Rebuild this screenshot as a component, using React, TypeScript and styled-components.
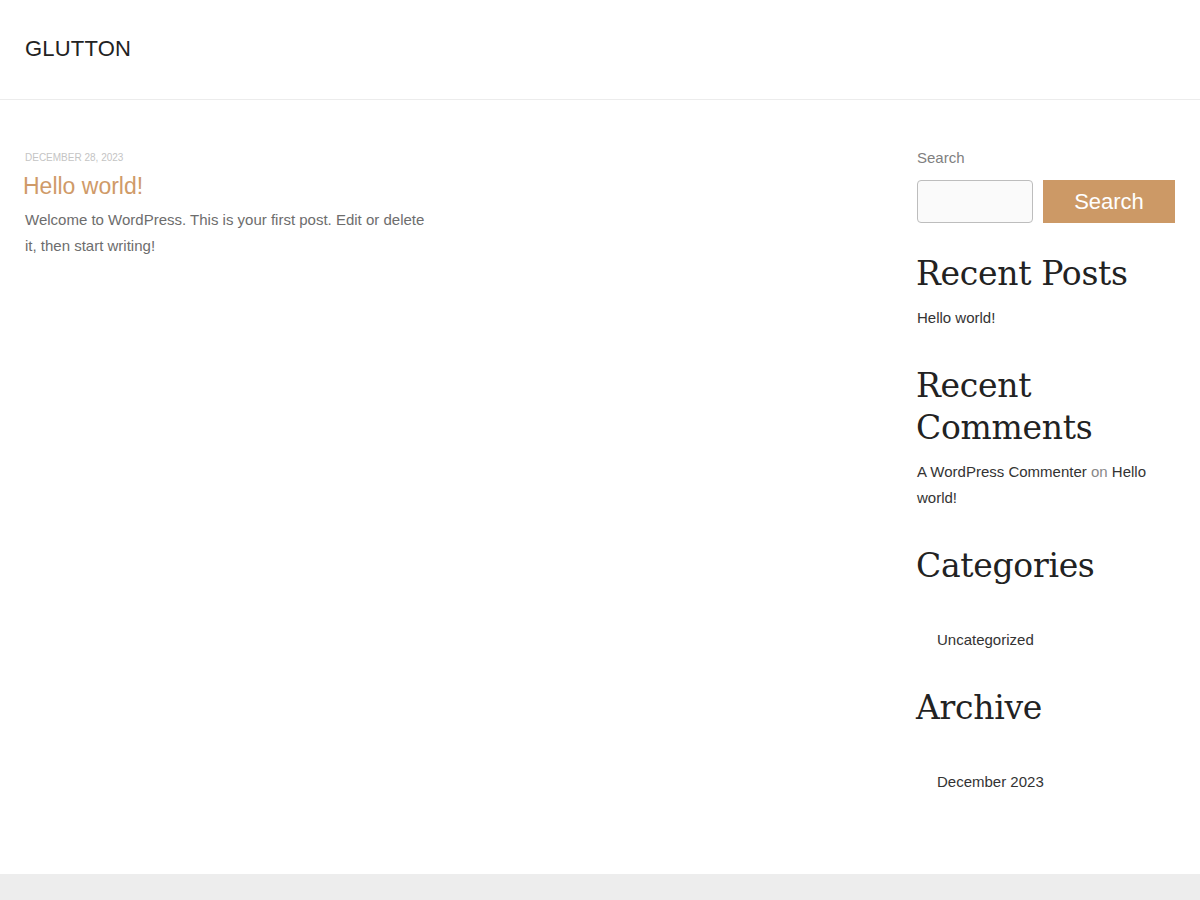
import React from "react";
import styled, { createGlobalStyle } from "styled-components";

const Global = createGlobalStyle`
  html, body { margin: 0; padding: 0; background: #fff; }
  body { font-family: "Liberation Sans", Arial, Helvetica, sans-serif; color: #333; }
  * { box-sizing: border-box; }
`;

const Page = styled.div`
  min-height: 900px;
  display: flex;
  flex-direction: column;
`;

const Header = styled.header`
  height: 100px;
  border-bottom: 1px solid #ececec;
  display: flex;
  align-items: center;
  padding: 0 25px;
`;

const SiteTitle = styled.a`
  font-size: 22px;
  color: #222;
  text-decoration: none;
  letter-spacing: 0.2px;
  margin-top: -1px;
`;

const Main = styled.div`
  flex: 1;
  display: flex;
  justify-content: space-between;
  padding: 49px 25px 60px 25px;
`;

const Content = styled.main`
  width: 410px;
  padding-top: 1px;
`;

const PostDate = styled.div`
  font-size: 10px;
  color: #c4c4c4;
  text-transform: uppercase;
  line-height: 16px;
`;

const PostTitle = styled.h2`
  margin: 5px 0 0 -2px;
  font-size: 23px;
  font-weight: 400;
  color: #cf9a68;
  line-height: 30px;
`;

const Excerpt = styled.p`
  margin: 6px 0 0;
  font-size: 15px;
  line-height: 26px;
  color: #6d6d6d;
`;

const Sidebar = styled.aside`
  width: 258px;
  display: flex;
  flex-direction: column;
`;

const Label = styled.label`
  font-size: 15px;
  color: #808080;
  line-height: 18px;
`;

const SearchRow = styled.div`
  display: flex;
  gap: 10px;
  margin-top: 13px;
`;

const Input = styled.input`
  width: 116px;
  height: 43px;
  border: 1px solid #bdbdbd;
  border-radius: 4px;
  background: #fafafa;
  outline: none;
`;

const Button = styled.button`
  width: 132px;
  height: 43px;
  border: none;
  background: #cc9966;
  color: #fff;
  font-family: "Liberation Sans", Arial, sans-serif;
  font-size: 22px;
  padding: 0;
`;

const WidgetTitle = styled.h2<{ $top: number }>`
  margin: ${(p) => p.$top}px 0 0 -1px;
  font-family: "DejaVu Serif", "Liberation Serif", serif;
  font-weight: 400;
  font-size: 33px;
  line-height: 42px;
  color: #222;
  letter-spacing: -0.3px;
`;

const List = styled.ul<{ $indent: number; $top: number }>`
  list-style: none;
  margin: ${(p) => p.$top}px 0 0;
  padding: 0 0 0 ${(p) => p.$indent}px;
`;

const Item = styled.li`
  font-size: 15px;
  line-height: 26px;
  color: #333;
`;

const Muted = styled.span`
  color: #888;
`;

const Footer = styled.footer`
  height: 26px;
  background: #ededed;
`;

export default function App() {
  return (
    <Page>
      <Global />
      <Header>
        <SiteTitle href="#">GLUTTON</SiteTitle>
      </Header>
      <Main>
        <Content>
          <PostDate>December 28, 2023</PostDate>
          <PostTitle>Hello world!</PostTitle>
          <Excerpt>
            Welcome to WordPress. This is your first post. Edit or delete it, then start writing!
          </Excerpt>
        </Content>
        <Sidebar>
          <Label>Search</Label>
          <SearchRow>
            <Input type="text" />
            <Button>Search</Button>
          </SearchRow>
          <WidgetTitle $top={30}>Recent Posts</WidgetTitle>
          <List $indent={0} $top={10}>
            <Item>Hello world!</Item>
          </List>
          <WidgetTitle $top={34}>Recent Comments</WidgetTitle>
          <List $indent={0} $top={10}>
            <Item>
              A WordPress Commenter <Muted>on</Muted> Hello world!
            </Item>
          </List>
          <WidgetTitle $top={34}>Categories</WidgetTitle>
          <List $indent={20} $top={40}>
            <Item>Uncategorized</Item>
          </List>
          <WidgetTitle $top={34}>Archive</WidgetTitle>
          <List $indent={20} $top={40}>
            <Item>December 2023</Item>
          </List>
        </Sidebar>
      </Main>
      <Footer />
    </Page>
  );
}
